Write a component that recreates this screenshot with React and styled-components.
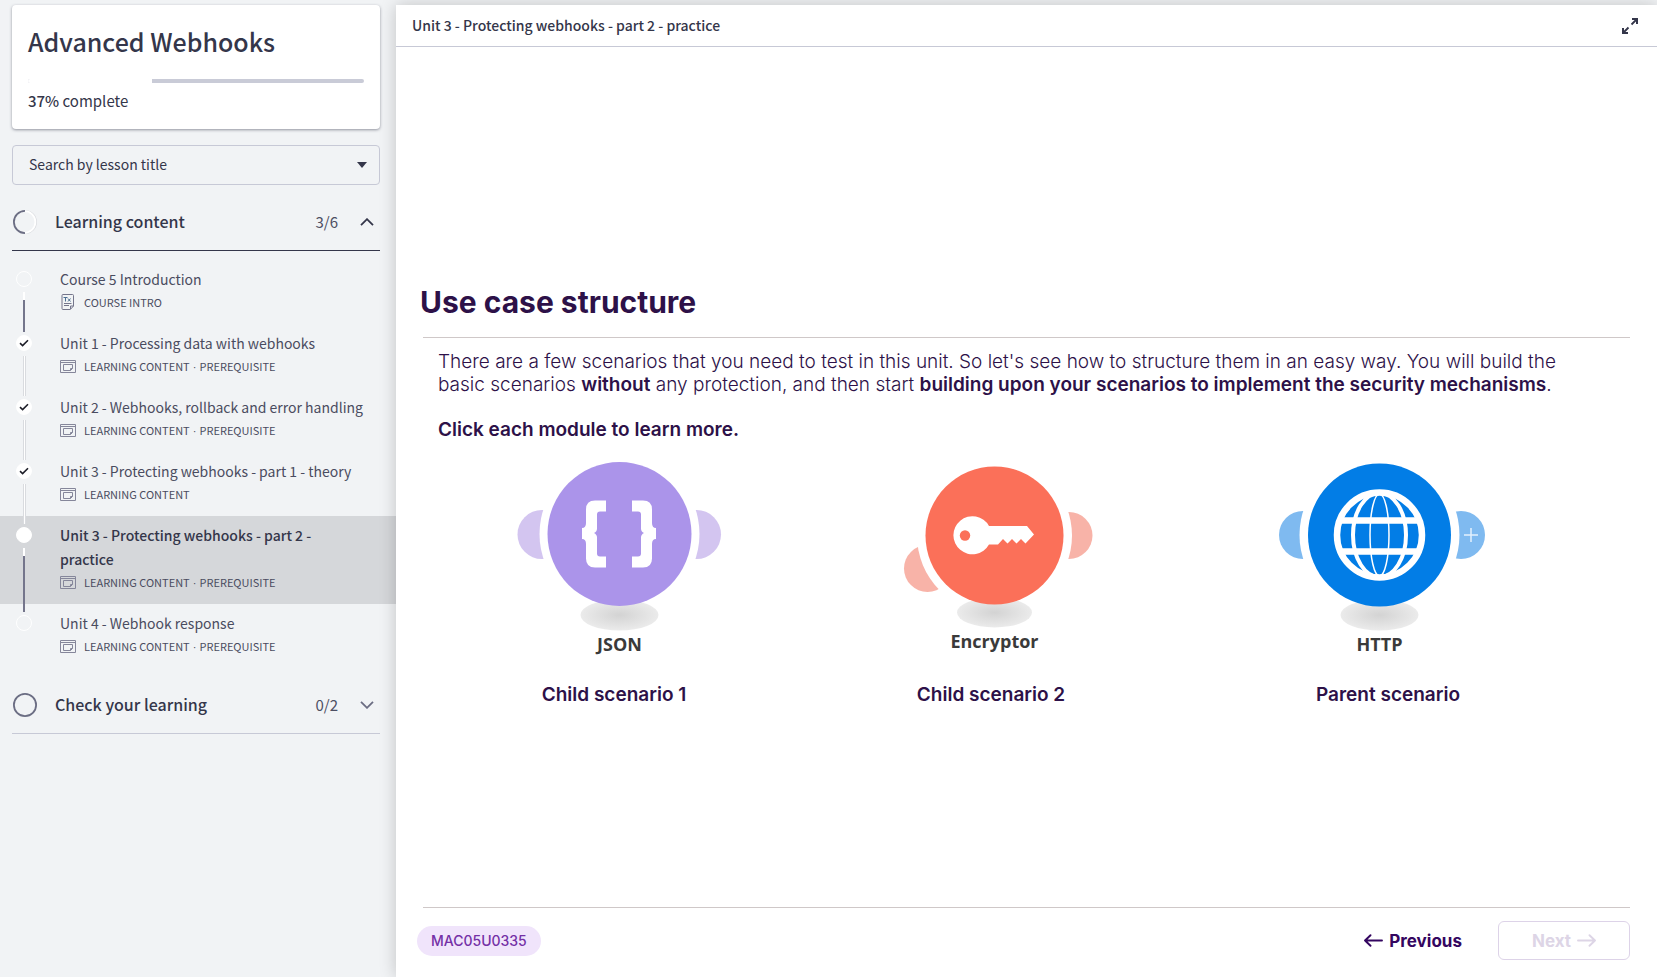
import React from "react";
import styled, { createGlobalStyle } from "styled-components";

const ui = `"Noto Sans CJK SC", "Noto Sans", sans-serif`;
const body = `Inter, "Liberation Sans", sans-serif`;

const GlobalStyle = createGlobalStyle`
  *, *::before, *::after { box-sizing: border-box; }
  body { margin: 0; background: #f1f3f5; color: #34364a; font-family: ${ui}; }
  h1, h2, p, ol { margin: 0; padding: 0; }
  button, select { font: inherit; color: inherit; }
`;

const Page = styled.div`
  display: flex;
  min-height: 100vh;
  padding-top: 5px;
`;

const Sidebar = styled.aside`
  flex: 0 0 396px;
  display: flex;
  flex-direction: column;
`;

const CourseCard = styled.section`
  margin: 0 16px 0 12px;
  padding: 18px 16px 16px;
  background: #fff;
  border-radius: 4px;
  box-shadow: 0 1px 3px rgba(49, 51, 71, 0.5);
`;

const CourseTitle = styled.h1`
  font-size: 25px;
  line-height: 36px;
  font-weight: 500;
`;

const ProgressTrack = styled.div`
  height: 4px;
  margin-top: 20px;
  border-radius: 2px;
  background: #c9cbd7;
  overflow: hidden;
`;

const ProgressFill = styled.div`
  height: 100%;
  background: #fff;
`;

const ProgressText = styled.p`
  margin-top: 6px;
  font-size: 15px;
  line-height: 24px;
  b { font-weight: 500; }
`;

const SearchBox = styled.label`
  display: grid;
  align-items: center;
  margin: 16px 16px 0 12px;
  height: 40px;
  > * { grid-area: 1 / 1; }
  svg { justify-self: end; margin-right: 13px; pointer-events: none; }
`;

const SearchSelect = styled.select`
  appearance: none;
  width: 100%;
  height: 40px;
  padding: 0 36px 2px 16px;
  border: 1px solid #c7c9d6;
  border-radius: 4px;
  background: transparent;
  font-size: 14px;
`;

const SectionHeader = styled.button`
  display: flex;
  align-items: center;
  margin: 0 16px 0 12px;
  padding: 25px 6px 16px 1px;
  border: 0;
  border-bottom: 1px solid ${(p) => (p.$open ? "#34364a" : "#c7c9d6")};
  background: none;
  text-align: left;
  line-height: 22px;
`;

const SectionName = styled.span`
  flex: 1;
  margin-left: 18px;
  padding-bottom: 2px;
  font-size: 16px;
  font-weight: 500;
`;

const SectionCount = styled.span`
  margin-right: 22px;
  font-size: 15px;
  color: #4d4f63;
`;

const LessonList = styled.ol`
  list-style: none;
  padding-top: 9px;
`;

const LessonRow = styled.li`
  background: ${(p) => (p.$active ? "#d5d7da" : "transparent")};
`;

const LessonLink = styled.a`
  display: flex;
  color: ${(p) => (p.$active ? "#34364a" : "#4a4c60")};
  text-decoration: none;
`;

const Rail = styled.div`
  position: relative;
  z-index: 1;
  flex: 0 0 48px;
  display: flex;
  flex-direction: column;
  align-items: center;
  gap: 5px;
  padding-top: 11px;
  margin-bottom: -8px;
`;

const Marker = styled.span`
  display: grid;
  place-items: center;
  width: 16px;
  height: 16px;
  border: 1px solid #fff;
  border-radius: 50%;
  background: ${(p) => (p.$filled ? "#fff" : "transparent")};
`;

const Connector = styled.span`
  flex: 1;
  width: 3px;
  border: solid #d9dbdf;
  border-width: 0 1px;
  background: #fff;
  ${(p) => p.$dark && "width: 2px; border: 0; background: linear-gradient(#fff 8px, #74758b 8px);"}
`;

const LessonText = styled.div`
  flex: 1;
  padding: 7px 30px 11px 12px;
`;

const LessonTitle = styled.div`
  font-size: 14px;
  line-height: 24px;
  font-weight: ${(p) => (p.$active ? 500 : 400)};
`;

const LessonMeta = styled.div`
  display: flex;
  align-items: center;
  gap: 8px;
  font-size: 11px;
  height: 22px;
  line-height: 22px;
  text-transform: uppercase;
  color: #4a4c60;
`;

const Dot = styled.span`
  font-family: "Liberation Sans", sans-serif;
  line-height: 1;
`;

const Main = styled.main`
  flex: 1;
  min-width: 0;
  display: flex;
  flex-direction: column;
  background: #fff;
  box-shadow: 0 0 16px rgba(0, 0, 0, 0.2);
`;

const TopBar = styled.header`
  display: flex;
  align-items: center;
  justify-content: space-between;
  height: 42px;
  padding: 0 19px 0 16px;
  border-bottom: 1px solid #c7c9d6;
  font-size: 14px;
  font-weight: 500;
`;

const TopBarTitle = styled.span`
  padding-bottom: 2px;
`;

const IconButton = styled.button`
  display: flex;
  padding: 0;
  border: 0;
  background: none;
`;

const Slide = styled.article`
  flex: 1;
  padding: 237px 27px 20px 24px;
  color: #2d1148;
  font-family: ${body};
`;

const SlideTitle = styled.h2`
  font-size: 30px;
  line-height: 36px;
  font-weight: 700;
`;

const Rule = styled.hr`
  height: 1px;
  margin: 17px 0 0 3px;
  border: 0;
  background: #cfc8c8;
`;

const Copy = styled.div`
  padding: 12px 59px 0 18px;
  font-size: 19px;
  line-height: 23px;
  font-weight: 300;
  b { font-weight: 600; }
  p + p { margin-top: 22px; }
`;

const Modules = styled.div`
  display: grid;
  grid-template-columns: 352fr 402fr 392fr;
  padding: 19px 46px 0 18px;
`;

const ModuleButton = styled.button`
  display: flex;
  flex-direction: column;
  align-items: center;
  gap: 23px;
  padding: 0;
  border: 0;
  background: none;
  font-size: 19px;
  line-height: 24px;
  font-weight: 600;
`;

const Footer = styled.footer`
  padding: 0 27px 17px 24px;
  font-family: ${body};
`;

const FooterRow = styled.div`
  display: flex;
  align-items: center;
  padding-top: 13px;
`;

const FooterRule = styled(Rule)`
  margin-top: 0;
`;

const Code = styled.span`
  margin-left: -3px;
  margin-right: auto;
  padding: 0 14px;
  border-radius: 15px;
  background: #f0e4fb;
  color: #7430a6;
  font-size: 14px;
  line-height: 30px;
  font-weight: 500;
`;

const NavButton = styled.button`
  display: flex;
  align-items: center;
  justify-content: center;
  gap: 6px;
  height: 39px;
  padding: 0 ${(p) => (p.$outlined ? 33 : 36)}px;
  border: ${(p) => (p.$outlined ? "1px solid #ddd3e8" : "0")};
  border-radius: 6px;
  background: none;
  color: ${(p) => (p.$outlined ? "#ddd5e6" : "#340660")};
  font-size: 17px;
  font-weight: 700;
`;

const lessons = [
  { title: "Course 5 Introduction", kind: "Course intro", state: "open", dark: true, doc: true },
  { title: "Unit 1 - Processing data with webhooks", kind: "Learning content", required: true, state: "done" },
  { title: "Unit 2 - Webhooks, rollback and error handling", kind: "Learning content", required: true, state: "done" },
  { title: "Unit 3 - Protecting webhooks - part 1 - theory", kind: "Learning content", state: "done" },
  { title: "Unit 3 - Protecting webhooks - part 2 - practice", kind: "Learning content", required: true, state: "current", dark: true },
  { title: "Unit 4 - Webhook response", kind: "Learning content", required: true, state: "open" },
];

const Chevron = ({ up }) => (
  <svg width="14" height="8" viewBox="0 0 14 8" fill="none" stroke={up ? "#34364a" : "#6b6d83"} strokeWidth="1.8">
    <path d={up ? "M1 7.2 7 1.2l6 6" : "M1 .8l6 6 6-6"} />
  </svg>
);

const SectionRing = ({ half }) => (
  <svg width="24" height="24" viewBox="0 0 24 24" fill="none">
    <circle cx="12" cy="12" r="11.1" stroke={half ? "#d9dbdf" : "#6b6d83"} strokeWidth="1.8" />
    {half && <circle cx="11.6" cy="12" r="10.8" stroke="#fff" strokeWidth="1.8" />}
    {half && <path d="M12 .9a11.1 11.1 0 0 0 0 22.2" stroke="#6b6d83" strokeWidth="1.8" />}
  </svg>
);

const CheckIcon = () => (
  <svg width="10" height="8" viewBox="0 0 10 8" fill="none" stroke="#1d1e28" strokeWidth="1.6">
    <path d="M1 4.2l2.6 2.4L9 1.2" />
  </svg>
);

const DocIcon = () => (
  <svg width="16" height="16" viewBox="0 0 16 16" fill="none" stroke="#74758b">
    <path d="M3 .5h9.500a1 1 0 0 1 1 1V12l-3.200 3.500H3a1 1 0 0 1-1-1v-13a1 1 0 0 1 1-1z" />
    <path d="M10.500 15v-3h3M4 9.500h7.500M4 11.500h5" />
    <path d="M3.500 3.500h4M5.500 3.500v4M8 4.500l2.500 3M10.500 4.500 8 7.500" stroke="#4c6f92" />
  </svg>
);

const SlideIcon = () => (
  <svg width="16" height="13" viewBox="0 0 16 13" fill="none" stroke="#85869a">
    <path d="M.5.5h15v12H.5zM.5 2.500h15" />
    <path d="M10.500 10.500h-7v-6h9v4l-2 2v-2h2" />
  </svg>
);

const ExpandIcon = () => (
  <svg width="16" height="16" viewBox="0 0 16 16" fill="none" stroke="#34364a" strokeWidth="2">
    <path d="M9.500 6.500 14.500 1.500M6.500 9.500 1.500 14.500" strokeWidth="1.8" />
    <path d="M10 1h5v5M6 15H1v-5" />
  </svg>
);

const Arrow = ({ right }) => (
  <svg width="19" height="13" viewBox="0 0 19 13" fill="none" stroke="currentColor" strokeWidth="1.900" strokeLinecap="round" strokeLinejoin="round">
    <path d={right ? "M1 6.500h17M12.500 1.200 18 6.500l-5.500 5.300" : "M18 6.500H1M6.500 1.200 1 6.500l5.500 5.300"} />
  </svg>
);

const caption = { textAnchor: "middle", fontFamily: '"Open Sans", "Noto Sans", sans-serif', fontWeight: 700, fontSize: 18, fill: "#3a3a3a" };

const ShadowGradient = ({ id }) => (
  <radialGradient id={id}>
    <stop offset="0" stopColor="#d3d3d3" />
    <stop offset="1" stopColor="#ebebeb" />
  </radialGradient>
);

const JsonArt = () => (
  <svg width="220" height="200" viewBox="0 0 220 200">
    <defs><ShadowGradient id="shade-json" /></defs>
    <circle cx="38" cy="74.500" r="24.500" fill="#d3c5f0" />
    <circle cx="192.500" cy="74.500" r="24.500" fill="#d3c5f0" />
    <circle cx="115.500" cy="74" r="80" fill="#fff" />
    <ellipse cx="115.500" cy="155" rx="39" ry="15.500" fill="url(#shade-json)" />
    <circle cx="115.500" cy="74" r="72" fill="#ab94ea" />
    <path d="M102 40.500v11h-6q-3 0-3 3v14q0 3-3 4.500 3 1.500 3 4.500v16q0 3 3 3h6v11H91q-9 0-9-9V84q0-5-4-5V68q4 0 4-5V49.500q0-9 9-9zM128 40.500v11h6q3 0 3 3v14q0 3 3 4.500-3 1.500-3 4.500v16q0 3-3 3h-6v11h11q9 0 9-9V84q0-5 4-5V68q-4 0-4-5V49.500q0-9-9-9z" fill="#fff" />
    <text x="115.500" y="191" {...caption}>JSON</text>
  </svg>
);

const EncryptorArt = () => (
  <svg width="220" height="200" viewBox="0 0 220 200">
    <defs><ShadowGradient id="shade-key" /></defs>
    <circle cx="188" cy="75.500" r="23.500" fill="#f8b3a8" />
    <circle cx="46.500" cy="108.500" r="23.500" fill="#f8b3a8" />
    <circle cx="113.500" cy="75.500" r="77.500" fill="#fff" />
    <ellipse cx="113.500" cy="152.500" rx="37.500" ry="15" fill="url(#shade-key)" />
    <circle cx="113.500" cy="75.500" r="69" fill="#fb7059" />
    <path d="M108 66h38l7 8.500-8.500 9-4.500-4.500-4.500 4.500-4.500-4.500-4.500 4.500-4.500-4.500-5 5.500h-9a19 19 0 1 1 0-18.500z" fill="#fff" />
    <circle cx="84" cy="75.500" r="5.200" fill="#fb7059" />
    <text x="113.500" y="188" {...caption}>Encryptor</text>
  </svg>
);

const HttpArt = () => (
  <svg width="220" height="200" viewBox="0 0 220 200">
    <defs><ShadowGradient id="shade-http" /></defs>
    <circle cx="25" cy="75" r="24" fill="#7fbaf0" />
    <circle cx="183" cy="75" r="24" fill="#7fbaf0" />
    <circle cx="101.500" cy="75" r="80" fill="#fff" />
    <path d="M186 75h14M193 68v14" stroke="#e3f1fd" strokeWidth="1.500" />
    <ellipse cx="101.500" cy="155" rx="39" ry="15.500" fill="url(#shade-http)" />
    <circle cx="101.500" cy="75" r="71.500" fill="#027de6" />
    <g fill="none" stroke="#fff">
      <circle cx="101.500" cy="75" r="42.500" strokeWidth="6.500" />
      <ellipse cx="101.500" cy="75" rx="26.500" ry="42" strokeWidth="4" />
      <ellipse cx="101.500" cy="75" rx="9.500" ry="41" strokeWidth="1.500" />
      <path d="M61 60.500h81M61 91.500h81" strokeWidth="6.500" />
    </g>
    <text x="101.500" y="191" {...caption}>HTTP</text>
  </svg>
);

const modules = [
  { label: "Child scenario 1", Art: JsonArt },
  { label: "Child scenario 2", Art: EncryptorArt },
  { label: "Parent scenario", Art: HttpArt },
];

export default function App() {
  return (
    <>
      <GlobalStyle />
      <Page>
        <Sidebar>
          <CourseCard>
            <CourseTitle>Advanced Webhooks</CourseTitle>
            <ProgressTrack role="progressbar" aria-label="Course progress" aria-valuenow={37}>
              <ProgressFill style={{ width: "37%" }} />
            </ProgressTrack>
            <ProgressText><b>37%</b> complete</ProgressText>
          </CourseCard>
          <SearchBox>
            <SearchSelect aria-label="Search by lesson title">
              <option>Search by lesson title</option>
            </SearchSelect>
            <svg width="10" height="6" viewBox="0 0 10 6" fill="#34364a"><path d="M0 0h10L5 6z" /></svg>
          </SearchBox>
          <SectionHeader $open aria-expanded="true">
            <SectionRing half />
            <SectionName>Learning content</SectionName>
            <SectionCount>3/6</SectionCount>
            <Chevron up />
          </SectionHeader>
          <LessonList>
            {lessons.map((l, i) => {
              const active = l.state === "current";
              return (
                <LessonRow key={l.title} $active={active}>
                  <LessonLink href="#" $active={active} aria-current={active ? "page" : undefined}>
                    <Rail>
                      <Marker $filled={l.state !== "open"}>{l.state === "done" && <CheckIcon />}</Marker>
                      {i < lessons.length - 1 && <Connector $dark={l.dark} />}
                    </Rail>
                    <LessonText>
                      <LessonTitle $active={active}>{l.title}</LessonTitle>
                      <LessonMeta>
                        {l.doc ? <DocIcon /> : <SlideIcon />}
                        <span>
                          {l.kind}
                          {l.required && <><Dot> · </Dot>Prerequisite</>}
                        </span>
                      </LessonMeta>
                    </LessonText>
                  </LessonLink>
                </LessonRow>
              );
            })}
          </LessonList>
          <SectionHeader aria-expanded="false">
            <SectionRing />
            <SectionName>Check your learning</SectionName>
            <SectionCount>0/2</SectionCount>
            <Chevron />
          </SectionHeader>
        </Sidebar>
        <Main>
          <TopBar>
            <TopBarTitle>Unit 3 - Protecting webhooks - part 2 - practice</TopBarTitle>
            <IconButton aria-label="Full screen"><ExpandIcon /></IconButton>
          </TopBar>
          <Slide>
            <SlideTitle>Use case structure</SlideTitle>
            <Rule />
            <Copy>
              <p>
                There are a few scenarios that you need to test in this unit. So let's see how to structure them in an easy way. You will build the basic scenarios <b>without</b> any protection, and then start <b>building upon your scenarios to implement the security mechanisms</b>.
              </p>
              <p><b>Click each module to learn more.</b></p>
            </Copy>
            <Modules>
              {modules.map(({ label, Art }) => (
                <ModuleButton key={label}>
                  <Art />
                  <span>{label}</span>
                </ModuleButton>
              ))}
            </Modules>
          </Slide>
          <Footer>
            <FooterRule />
            <FooterRow>
              <Code>MAC05U0335</Code>
              <NavButton><Arrow /> Previous</NavButton>
              <NavButton $outlined disabled>Next <Arrow right /></NavButton>
            </FooterRow>
          </Footer>
        </Main>
      </Page>
    </>
  );
}
